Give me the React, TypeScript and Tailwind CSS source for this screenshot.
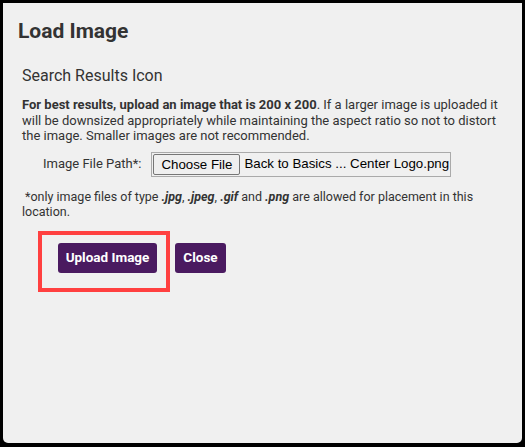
const font = { fontFamily: 'Roboto, "Liberation Sans", sans-serif' };

export default function App() {
  return (
    <div className="w-[525px] h-[447px] bg-black pt-[3px] pl-[3px] pr-[3px] pb-[4px]" style={font}>
      <div className="h-full bg-[#f0f0f0] rounded-b-[5px] pl-[15px] pr-[17px] pt-[15px] text-[#333]">
        <h1 className="text-[21px] leading-[26px] font-bold text-[#333]">Load Image</h1>

        <div className="pl-[4px] mt-[22px]">
          <h2 className="text-[16px] leading-[20px] text-[#333]">Search Results Icon</h2>

          <p className="mt-[11px] text-[13px] leading-[15.5px] text-[#333]">
            <b>For best results, upload an image that is 200 x 200</b>. If a larger image is
            uploaded it will be downsized appropriately while maintaining the aspect ratio so not
            to distort the image. Smaller images are not recommended.
          </p>

          <div className="flex items-center mt-[8px] pl-[21px] gap-[10px]">
            <label className="text-[13px] text-[#333]">Image File Path*:</label>
            <div
              className="flex items-center h-[25px] w-[300px] border border-[#aaa] pl-[1px]"
              style={{ fontFamily: '"Liberation Sans", Arial, sans-serif' }}
            >
              <button
                type="button"
                className="h-[21px] px-[7px] bg-[#efefef] border border-[#767676] rounded-[2px] text-[13.3px] text-black"
              >
                Choose File
              </button>
              <span className="ml-[4px] text-[13.3px] text-black whitespace-nowrap">
                Back to Basics ... Center Logo.png
              </span>
            </div>
          </div>

          <p className="mt-[12px] text-[12.5px] leading-[15px] text-[#333]">
            &nbsp;*only image files of type <b><i>.jpg</i></b>, <b><i>.jpeg</i></b>,{' '}
            <b><i>.gif</i></b> and <b><i>.png</i></b> are allowed for placement in this location.
          </p>

          <div className="flex items-start mt-[12px] pl-[16px]">
            <div className="border-[4px] border-[#ff4040] pl-[16px] pr-[9px] pt-[8px] pb-[15px]">
              <button
                type="button"
                className="h-[30px] w-[99px] rounded-[3px] bg-[#4a1a60] text-white text-[13.5px] font-bold"
              >
                Upload Image
              </button>
            </div>
            <button
              type="button"
              className="ml-[5px] mt-[12px] h-[30px] w-[51px] rounded-[3px] bg-[#4a1a60] text-white text-[13.5px] font-bold"
            >
              Close
            </button>
          </div>
        </div>
      </div>
    </div>
  );
}
